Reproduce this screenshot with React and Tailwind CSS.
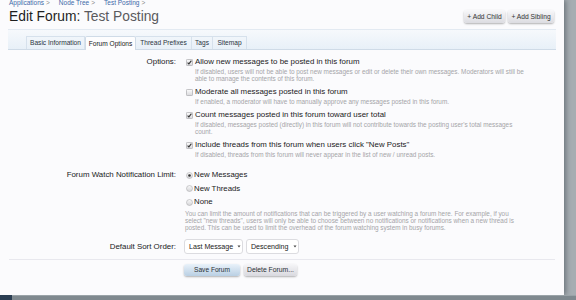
import React from "react";

const Check = ({ checked }) => (
  <svg width="7" height="7" viewBox="0 0 7 7" className="block">
    <defs>
      <linearGradient id="cbg" x1="0" y1="0" x2="0" y2="1">
        <stop offset="0" stopColor="#fdfdfd" />
        <stop offset="1" stopColor="#d8d8dc" />
      </linearGradient>
    </defs>
    <rect x="0.4" y="0.4" width="6.2" height="6.2" rx="1" fill="url(#cbg)" stroke="#a4a4a8" strokeWidth="0.7" />
    {checked && <path d="M1.6 3.6 L2.9 4.9 L5.4 1.7" fill="none" stroke="#333" strokeWidth="1.1" />}
  </svg>
);

const Radio = ({ checked }) => (
  <svg width="7" height="7" viewBox="0 0 7 7" className="block">
    <defs>
      <linearGradient id="rbg" x1="0" y1="0" x2="0" y2="1">
        <stop offset="0" stopColor="#fafafa" />
        <stop offset="1" stopColor="#d4d4d8" />
      </linearGradient>
    </defs>
    <circle cx="3.5" cy="3.5" r="3" fill="url(#rbg)" stroke="#b0b0b4" strokeWidth="0.6" />
    {checked && <circle cx="3.5" cy="3.5" r="1.3" fill="#333" />}
  </svg>
);

const Arrow = () => (
  <svg width="4" height="3" viewBox="0 0 4 3" className="block">
    <path d="M0.5 0.5 L3.5 0.5 L2 2.5 Z" fill="#444" />
  </svg>
);

const Option = ({ checked, label, hints }) => (
  <div className="flex">
    <div className="w-[10px] pl-[1px] pt-[1.5px]">
      <Check checked={checked} />
    </div>
    <div>
      <div className="text-[7.9px] leading-[10px] text-[#1a1a1a] whitespace-nowrap">{label}</div>
      <div className="mt-[1px] text-[6.4px] leading-[7px] text-[#a5a5a8] whitespace-nowrap">
        {hints.map((h, i) => (
          <div key={i}>{h}</div>
        ))}
      </div>
    </div>
  </div>
);

const RadioRow = ({ checked, label }) => (
  <div className="flex items-center h-[10px]">
    <div className="w-[9px] pl-[0.5px]">
      <Radio checked={checked} />
    </div>
    <span className="text-[7.8px] leading-[10px] text-[#1a1a1a]">{label}</span>
  </div>
);

const tabs = [
  { name: "Basic Information", w: "w-[59px]" },
  { name: "Forum Options", w: "w-[51px]", active: true },
  { name: "Thread Prefixes", w: "w-[56px]" },
  { name: "Tags", w: "w-[21px]" },
  { name: "Sitemap", w: "w-[34px]" },
];

export default function App() {
  return (
    <div className="w-[576px] h-[300px] overflow-hidden bg-[#a6adb2] flex flex-col font-['Liberation_Sans',Arial,sans-serif]">
      <div className="flex h-[295px]">
        <div className="w-[564px] h-[295px] bg-[#fbfbfd] shadow-[2px_0_5px_rgba(40,50,60,0.45)] overflow-hidden px-[9px]">
          {/* breadcrumb */}
          <div className="-mt-[1px] h-[7px] text-[6.5px] leading-[8px] text-[#3d6aa8] flex whitespace-nowrap">
            <span>Applications</span>
            <span className="ml-[2px] text-[#888]">&gt;</span>
            <span className="ml-[9px]">Node Tree</span>
            <span className="ml-[2px] text-[#888]">&gt;</span>
            <span className="ml-[9px]">Test Posting</span>
            <span className="ml-[2px] text-[#888]">&gt;</span>
          </div>
          {/* title row */}
          <div className="flex justify-between items-start mt-[3px]">
            <h1 className="text-[13.8px] leading-[16px] text-[#1e1e1e] whitespace-nowrap">
              Edit Forum: <span className="text-[#5a5a5e]">Test Posting</span>
            </h1>
            <div className="flex gap-[3px] mt-[0.5px] mr-[1px]">
              <button className="w-[41px] h-[13px] rounded-[3px] bg-gradient-to-b from-[#f8f8fa] to-[#dcdce1] shadow-[0_1px_2px_rgba(0,0,0,0.3)] text-[6.7px] leading-[13px] text-[#333] whitespace-nowrap">
                + Add Child
              </button>
              <button className="w-[46px] h-[13px] rounded-[3px] bg-gradient-to-b from-[#f8f8fa] to-[#dcdce1] shadow-[0_1px_2px_rgba(0,0,0,0.3)] text-[6.7px] leading-[13px] text-[#333] whitespace-nowrap">
                + Add Sibling
              </button>
            </div>
          </div>
          {/* tab bar */}
          <div className="mt-[4px] -ml-[1px] w-[548px] h-[21px] border-t border-b border-t-[#e3eaf2] border-b-[#cfdbe7] bg-gradient-to-b from-[#f6f9fc] to-[#e8f0f8] flex items-end pl-[18px]">
            {tabs.map((t, i) => (
              <div
                key={t.name}
                className={
                  t.active
                    ? `${t.w} h-[14px] -mb-[1px] bg-[#fdfdfe] border-l border-r border-t border-[#cfdbe7] rounded-t-[2px] text-[6.6px] leading-[13px] text-center text-[#222] whitespace-nowrap`
                    : `${t.w} h-[13px] ${i === 0 ? "border-l" : ""} border-r border-t border-[#d6e1ec] text-[6.6px] leading-[12px] text-center text-[#2a3440] whitespace-nowrap`
                }
              >
                {t.name}
              </div>
            ))}
          </div>

          {/* Options row */}
          <div className="flex mt-[7px]">
            <div className="w-[167px] text-right text-[7.9px] leading-[10px] text-[#1a1a1a]">Options:</div>
            <div className="pl-[9px] flex flex-col gap-[5px]">
              <Option
                checked
                label="Allow new messages to be posted in this forum"
                hints={[
                  "If disabled, users will not be able to post new messages or edit or delete their own messages. Moderators will still be",
                  "able to manage the contents of this forum.",
                ]}
              />
              <Option
                label="Moderate all messages posted in this forum"
                hints={["If enabled, a moderator will have to manually approve any messages posted in this forum."]}
              />
              <Option
                checked
                label="Count messages posted in this forum toward user total"
                hints={[
                  "If disabled, messages posted (directly) in this forum will not contribute towards the posting user's total messages",
                  "count.",
                ]}
              />
              <Option
                checked
                label={'Include threads from this forum when users click "New Posts"'}
                hints={["If disabled, threads from this forum will never appear in the list of new / unread posts."]}
              />
            </div>
          </div>

          {/* Forum watch row */}
          <div className="flex mt-[12px]">
            <div className="w-[167px] text-right text-[7.9px] leading-[10px] text-[#1a1a1a] whitespace-nowrap">
              Forum Watch Notification Limit:
            </div>
            <div className="pl-[9px]">
              <div className="flex flex-col gap-[3.7px]">
                <RadioRow checked label="New Messages" />
                <RadioRow label="New Threads" />
                <RadioRow label="None" />
              </div>
              <div className="mt-[4px] text-[6.4px] leading-[6.7px] text-[#a5a5a8] whitespace-nowrap">
                <div>You can limit the amount of notifications that can be triggered by a user watching a forum here. For example, if you</div>
                <div>select "new threads", users will only be able to choose between no notifications or notifications when a new thread is</div>
                <div>posted. This can be used to limit the overhead of the forum watching system in busy forums.</div>
              </div>
            </div>
          </div>

          {/* sort row */}
          <div className="flex items-center mt-[8px]">
            <div className="w-[167px] text-right text-[7.9px] leading-[10px] text-[#1a1a1a]">Default Sort Order:</div>
            <div className="pl-[8px] flex gap-[3px]">
              <div className="w-[59px] h-[15px] rounded-[3px] border border-[#dcdce0] bg-white flex items-center pl-[4px] gap-[4px] text-[7.1px] text-[#222] whitespace-nowrap">
                Last Message <Arrow />
              </div>
              <div className="w-[53px] h-[15px] rounded-[3px] border border-[#dcdce0] bg-white flex items-center pl-[4px] gap-[5px] text-[7.1px] text-[#222] whitespace-nowrap">
                Descending <Arrow />
              </div>
            </div>
          </div>

          <div className="mt-[5px] h-px bg-[#e8e8ee]" />

          {/* buttons */}
          <div className="flex mt-[4px] ml-[175px] gap-[4px]">
            <button className="w-[56px] h-[12px] rounded-[3px] bg-gradient-to-b from-[#e9f2fa] to-[#b9cfe3] shadow-[0_1px_2px_rgba(0,0,0,0.3)] text-[6.6px] leading-[12px] text-[#2a2f36] whitespace-nowrap">
              Save Forum
            </button>
            <button className="w-[53px] h-[12px] rounded-[3px] bg-gradient-to-b from-[#f6f6f8] to-[#d9d9df] shadow-[0_1px_2px_rgba(0,0,0,0.3)] text-[6.8px] leading-[12px] text-[#2a2f36] whitespace-nowrap">
              Delete Forum...
            </button>
          </div>
        </div>
      </div>
      <div className="h-[5px] flex">
        <div className="w-[12px] bg-[#2b3e52]" />
        <div className="flex-1 bg-[#7f898f] border-t border-t-[#9aa3a8]" />
      </div>
    </div>
  );
}
